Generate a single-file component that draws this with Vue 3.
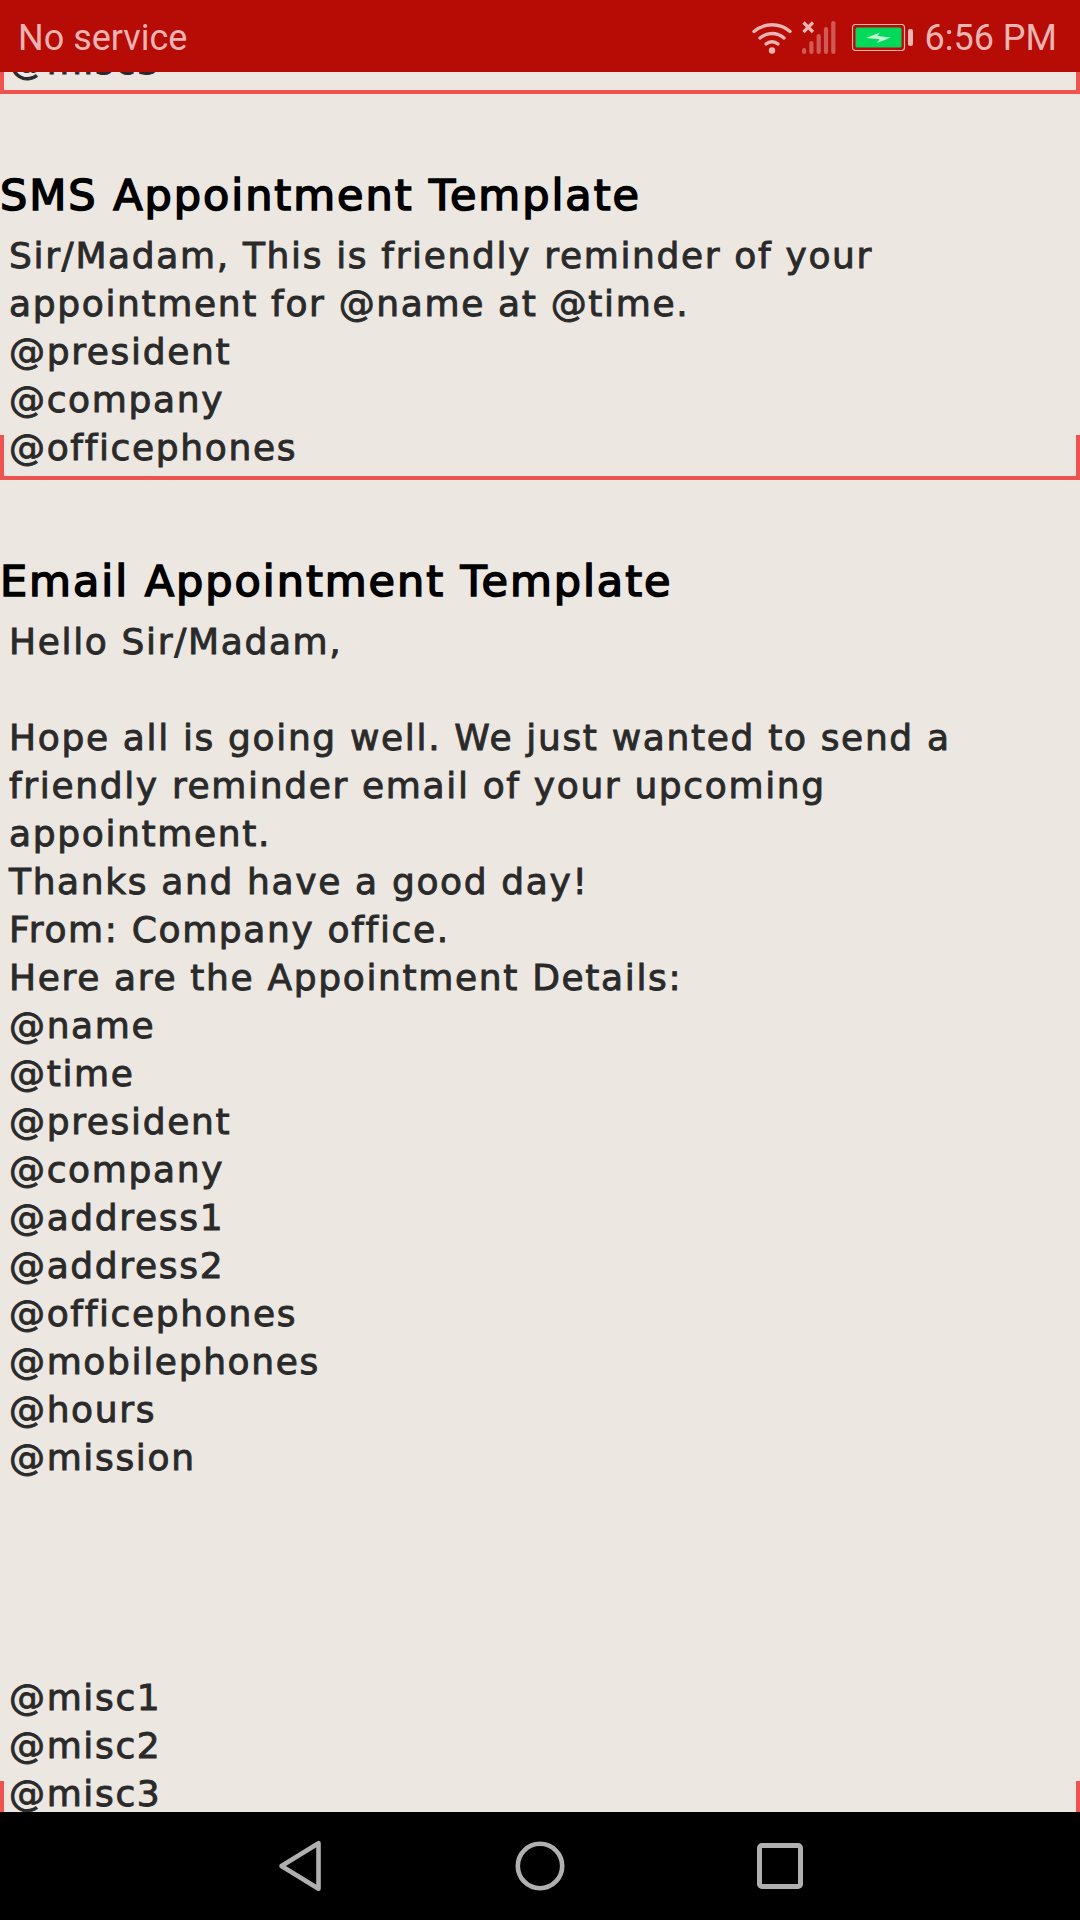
<script setup>
const smsLines = [
  'Sir/Madam, This is friendly reminder of your',
  'appointment for @name at @time.',
  '@president',
  '@company',
  '@officephones',
]
const emailLines = [
  'Hello Sir/Madam,',
  '',
  'Hope all is going well. We just wanted to send a',
  'friendly reminder email of your upcoming',
  'appointment.',
  'Thanks and have a good day!',
  'From: Company office.',
  'Here are the Appointment Details:',
  '@name',
  '@time',
  '@president',
  '@company',
  '@address1',
  '@address2',
  '@officephones',
  '@mobilephones',
  '@hours',
  '@mission',
  '',
  '',
  '',
  '',
  '@misc1',
  '@misc2',
  '@misc3',
]
const bars = [
  { x: 0, h: 6 },
  { x: 7.3, h: 13 },
  { x: 14.6, h: 20 },
  { x: 21.9, h: 27 },
  { x: 29.2, h: 33 },
]
</script>

<template>
  <div class="screen">
    <header class="status">
      <span class="status-text">No service</span>
      <div class="status-right">
        <svg class="wifi" width="40" height="32" viewBox="0 0 40 32" fill="none" stroke="#ecb4b2" stroke-width="3.4" stroke-linecap="round">
          <path d="M2 9.5C12.5 .5 27.5 .5 38 9.5" />
          <path d="M8 16C15 10 25 10 32 16" />
          <path d="M14 22C17.5 19 22.5 19 26 22" />
          <circle cx="20" cy="28.5" r="3.2" fill="#ecb4b2" stroke="none" />
        </svg>
        <svg class="signal" width="34" height="33" viewBox="0 0 34 33">
          <rect v-for="b in bars" :key="b.x" :x="b.x" :y="33 - b.h" width="4.2" :height="b.h" rx="2" fill="#cf5a57" />
          <path d="M1.5 1.5L11 11M11 1.5L1.5 11" stroke="#ecb4b2" stroke-width="3.2" fill="none" />
        </svg>
        <svg class="battery" width="61" height="27" viewBox="0 0 61 27">
          <rect x=".5" y=".5" width="52" height="26" rx="3" fill="none" stroke="#ecb4b2" stroke-width="1.2" />
          <rect x="3.5" y="3.5" width="46" height="20" rx="1.5" fill="#00d95a" />
          <rect x="56" y="5" width="5" height="17" rx="2" fill="#ecb4b2" />
          <path d="M14 14L28 8.5L25.5 12L39 13.5L25 19L27.5 15.3Z" fill="#bff5d3" />
        </svg>
        <span class="status-text time">6:56 PM</span>
      </div>
    </header>

    <main class="content">
      <div class="scroller">
        <div class="field first">
          <div class="line">@misc3</div>
        </div>

        <section class="block">
          <h2 class="title">SMS Appointment Template</h2>
          <div class="field">
            <div v-for="(l, i) in smsLines" :key="i" class="line">{{ l }}</div>
          </div>
        </section>

        <section class="block">
          <h2 class="title">Email Appointment Template</h2>
          <div class="field">
            <div v-for="(l, i) in emailLines" :key="i" class="line">{{ l }}</div>
          </div>
        </section>
      </div>
    </main>

    <nav class="nav">
      <div class="nav-slot">
        <svg width="44" height="52" viewBox="0 0 44 52" fill="none" stroke="#b0b0b0" stroke-width="4.6" stroke-linejoin="round">
          <path d="M40.5 3.2V48.8L3.5 26Z" />
        </svg>
      </div>
      <div class="nav-slot">
        <svg width="50" height="50" viewBox="0 0 50 50" fill="none" stroke="#b0b0b0" stroke-width="4.6">
          <circle cx="25" cy="25" r="22.2" />
        </svg>
      </div>
      <div class="nav-slot">
        <svg width="46" height="46" viewBox="0 0 46 46" fill="none" stroke="#b0b0b0" stroke-width="5" stroke-linejoin="round">
          <rect x="2.5" y="2.5" width="41" height="41" rx="2.5" />
        </svg>
      </div>
    </nav>
  </div>
</template>

<style>
html, body { margin: 0; padding: 0; background: #ece7e1; }
</style>

<style scoped>
.screen {
  width: 1080px;
  height: 1920px;
  display: flex;
  flex-direction: column;
  overflow: hidden;
  background: #ece7e1;
  font-family: "DejaVu Sans", sans-serif;
}
.status {
  flex: 0 0 72px;
  box-sizing: border-box;
  display: flex;
  align-items: center;
  justify-content: space-between;
  padding: 3px 23px 0 18px;
  background: #b70b06;
}
.status-text {
  font-family: Roboto, sans-serif;
  font-size: 36px;
  color: #ecb4b2;
}
.status-right {
  display: flex;
  align-items: center;
}
.wifi { margin-right: 10px; }
.signal { margin-right: 16px; }
.battery { margin-right: 12px; }
.content {
  flex: 1;
  min-height: 0;
  overflow: hidden;
}
.scroller {
  margin-top: -300px;
}
.field {
  position: relative;
  padding: 0 9px 8px;
}
.field::after {
  content: "";
  position: absolute;
  left: 0;
  right: 0;
  bottom: 0;
  height: 41px;
  border: 4px solid #ef5350;
  border-top: none;
}
.field.first {
  padding-top: 266px;
}
.line {
  height: 48px;
  line-height: 48px;
  font-size: 36px;
  letter-spacing: 1.65px;
  color: #2a2a2a;
  -webkit-text-stroke: 0.9px #2a2a2a;
  white-space: pre;
}
.block {
  padding-top: 76px;
}
.title {
  margin: 0 0 12px;
  font-size: 43px;
  line-height: 50px;
  font-weight: 400;
  letter-spacing: 1.95px;
  color: #000;
  -webkit-text-stroke: 1.6px #000;
  white-space: pre;
}
.nav {
  flex: 0 0 108px;
  display: flex;
  justify-content: center;
  align-items: center;
  background: #000;
}
.nav-slot {
  width: 240px;
  display: flex;
  justify-content: center;
}
</style>
